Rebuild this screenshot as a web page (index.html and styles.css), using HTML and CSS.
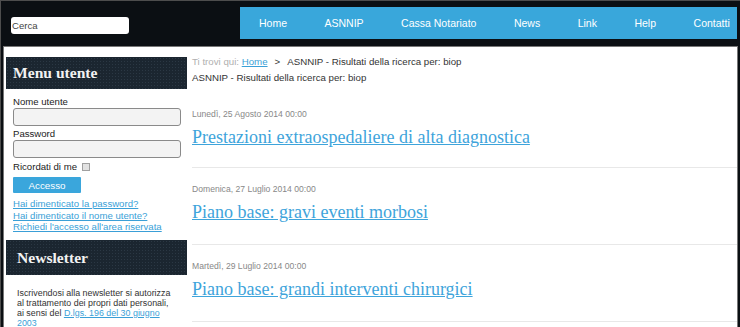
FILE: index.html
```html
<!DOCTYPE html>
<html lang="it">
<head>
  <meta charset="UTF-8" />
  <meta name="viewport" content="width=device-width, initial-scale=1.0" />
  <title>ASNNIP - Risultati della ricerca</title>
  <link rel="stylesheet" href="styles.css">
</head>
<body>

  <div class="site">
    <header class="topbar">
      <div class="search">
        <input type="text" name="searchword" value="Cerca" />
      </div>
      <nav class="mainnav">
        <a href="#">Home</a>
        <a href="#">ASNNIP</a>
        <a href="#">Cassa Notariato</a>
        <a href="#">News</a>
        <a href="#">Link</a>
        <a href="#">Help</a>
        <a href="#">Contatti</a>
      </nav>
    </header>

    <div class="page">
      <!-- Sidebar -->
      <aside class="sidebar">
        <div class="module">
          <h3 class="module-title">Menu utente</h3>
          <form class="login" action="#" method="post">
            <label for="username">Nome utente</label>
            <input type="text" id="username" name="username" />
            <label for="password">Password</label>
            <input type="password" id="password" name="password" />
            <div class="remember">Ricordati di me <span class="check"></span></div>
            <button type="button">Accesso</button>
            <ul class="login-links">
              <li><a href="#">Hai dimenticato la password?</a></li>
              <li><a href="#">Hai dimenticato il nome utente?</a></li>
              <li><a href="#">Richiedi l'accesso all'area riservata</a></li>
            </ul>
          </form>
        </div>

        <div class="module">
          <h3 class="module-title newsletter-title">Newsletter</h3>
          <p class="newsletter-text">
            Iscrivendosi alla newsletter si autorizza al trattamento dei propri dati personali,
            ai sensi del <a href="#">D.lgs. 196 del 30 giugno 2003</a>
          </p>
        </div>
      </aside>

      <!-- Main content -->
      <main class="content">
        <div class="breadcrumb">
          <span class="here">Ti trovi qui:</span> <a href="#">Home</a><span class="sep">&gt;</span>ASNNIP - Risultati della ricerca per: biop
        </div>
        <div class="page-heading">ASNNIP - Risultati della ricerca per: biop</div>

        <div class="results">
          <div class="result">
            <div class="date">Lunedì, 25 Agosto 2014 00:00</div>
            <a class="result-title" href="#">Prestazioni extraospedaliere di alta diagnostica</a>
          </div>
          <div class="result">
            <div class="date">Domenica, 27 Luglio 2014 00:00</div>
            <a class="result-title" href="#">Piano base: gravi eventi morbosi</a>
          </div>
          <div class="result">
            <div class="date">Martedì, 29 Luglio 2014 00:00</div>
            <a class="result-title" href="#">Piano base: grandi interventi chirurgici</a>
          </div>
        </div>
      </main>
    </div>
  </div>

</body>
</html>
```

FILE: styles.css
```css
/* Reset */
*, *::before, *::after {
  box-sizing: border-box;
}
body {
  margin: 0;
  background: #0b0f13;
  font-family: "Liberation Sans", Arial, sans-serif;
  color: #333;
}
a {
  color: #3a9fd7;
}
.site {
  border-top: 1px solid #4d4d4d;
  border-left: 1px solid #4d4d4d;
}

/* Top bar */
.topbar {
  display: flex;
  height: 45px;
}
.search {
  width: 239px;
  padding: 14px 0 0 10px;
}
.search input {
  width: 118px;
  height: 17px;
  padding: 0 1px;
  border: none;
  border-radius: 3px;
  background: #fff;
  font-family: inherit;
  font-size: 9.6px;
  color: #444;
}
.mainnav {
  flex: 1;
  display: flex;
  align-items: center;
  gap: 37.5px;
  height: 32px;
  margin: 6px 3px 0 0;
  padding-left: 19px;
  background: #39a7db;
}
.mainnav a {
  color: #fff;
  font-size: 10.5px;
  text-decoration: none;
}

/* Page */
.page {
  display: flex;
  margin: 0 2px;
  height: 290px;
  overflow: hidden;
  background: #fff;
  border: 1px solid #777;
  border-bottom: none;
}

/* Sidebar */
.sidebar {
  width: 181px;
  margin-left: 2px;
  padding-top: 10px;
  flex-shrink: 0;
}
.module-title {
  margin: 0;
  height: 32px;
  padding-left: 7px;
  background: radial-gradient(#2b3844 0.6px, transparent 0.9px) 0 0 / 3px 3px, #1b2630;
  color: #f2f2f2;
  font-family: "Liberation Serif", "Times New Roman", serif;
  font-size: 15.6px;
  line-height: 32px;
}
.newsletter-title {
  height: 35px;
  padding-left: 11px;
  line-height: 35px;
}
.login {
  padding: 7px 6px 0 7px;
  font-size: 9.6px;
}
.login label {
  display: block;
  line-height: 12px;
  color: #222;
}
.login input {
  display: block;
  width: 168px;
  height: 18px;
  margin-bottom: 2px;
  border: 1px solid #8a8a8a;
  border-radius: 3px;
  background: #f3f3f3;
}
.remember {
  display: flex;
  align-items: center;
  gap: 5px;
  margin-top: 3px;
  line-height: 12px;
  color: #222;
}
.check {
  width: 8px;
  height: 8px;
  border: 1px solid #a0a0a0;
  background: #e2e2e2;
}
.login button {
  display: block;
  width: 68px;
  height: 16px;
  margin-top: 4px;
  padding: 0;
  border: none;
  border-radius: 1px;
  background: #3aa6dc;
  color: #fff;
  font-family: inherit;
  font-size: 9.8px;
}
.login-links {
  list-style: none;
  margin: 5px 0 7px;
  padding: 0;
  line-height: 11.5px;
}
.newsletter-text {
  margin: 13px 0 0;
  padding: 0 12px 0 11px;
  font-size: 8.9px;
  line-height: 10px;
  color: #333;
}

/* Main content */
.content {
  flex: 1;
  margin-left: 5px;
  padding-top: 7px;
  font-size: 9.7px;
}
.breadcrumb,
.page-heading {
  line-height: 16px;
}
.breadcrumb .here {
  color: #b0b0b0;
}
.breadcrumb .sep {
  margin: 0 7px;
}
.results {
  margin-top: 7px;
}
.result {
  padding: 16px 0 21px;
  border-bottom: 1px solid #e8e8e8;
}
.result:first-child {
  padding-bottom: 19px;
}
.date {
  font-size: 8.6px;
  line-height: 10px;
  color: #888;
}
.result-title {
  display: block;
  margin-top: 7px;
  font-family: "Liberation Serif", "Times New Roman", serif;
  font-size: 18px;
  line-height: 22px;
  color: #3ea4db;
}
```
